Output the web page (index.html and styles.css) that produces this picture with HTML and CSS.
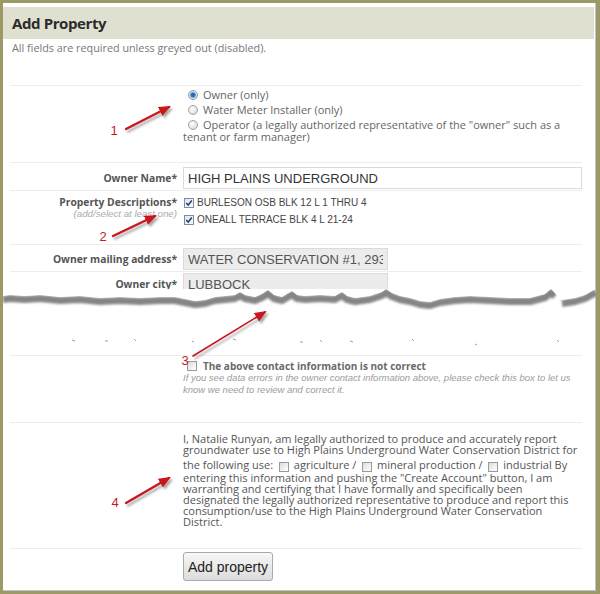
FILE: index.html
```html
<!DOCTYPE html>
<html>
<head>
<meta charset="utf-8">
<title>Add Property</title>
<link rel="stylesheet" href="styles.css">
</head>
<body>
<div class="frame">
  <div class="titlebar"><h1>Add Property</h1></div>
  <p class="note">All fields are required unless greyed out (disabled).</p>

  <form class="form">
    <div class="row row-role">
      <div class="lbl"></div>
      <div class="field">
        <label class="opt"><span class="radio on"></span>Owner (only)</label>
        <label class="opt"><span class="radio"></span>Water Meter Installer (only)</label>
        <label class="opt"><span class="radio"></span>Operator (a legally authorized representative of the "owner" such as a tenant or farm manager)</label>
      </div>
    </div>

    <div class="row row-input row-name">
      <div class="lbl">Owner Name*</div>
      <div class="field"><input class="txt" type="text" value="HIGH PLAINS UNDERGROUND"></div>
    </div>

    <div class="row row-props">
      <div class="lbl">
        <span class="lbl-main">Property Descriptions*</span>
        <span class="hint">(add/select at least one)</span>
      </div>
      <div class="field">
        <div class="chk-line"><span class="cb on"><svg viewBox="0 0 10 10" width="8" height="8"><path d="M1.5 5 L4 7.5 L8.5 1.8" /></svg></span>BURLESON OSB BLK 12 L 1 THRU 4</div>
        <div class="chk-line"><span class="cb on"><svg viewBox="0 0 10 10" width="8" height="8"><path d="M1.5 5 L4 7.5 L8.5 1.8" /></svg></span>ONEALL TERRACE BLK 4 L 21-24</div>
      </div>
    </div>

    <div class="row row-input row-addr">
      <div class="lbl">Owner mailing address*</div>
      <div class="field"><input class="txt dis" type="text" value="WATER CONSERVATION #1, 2930 AVE Q" disabled></div>
    </div>

    <div class="row row-input row-city">
      <div class="lbl">Owner city*</div>
      <div class="field"><input class="txt dis" type="text" value="LUBBOCK" disabled></div>
    </div>

    <svg class="torn" viewBox="3 289 593 66" width="593" height="66" aria-hidden="true">
      <defs>
        <filter id="soft" x="-5%" y="-50%" width="110%" height="200%"><feGaussianBlur stdDeviation="0.9"/></filter>
      </defs>
      <g class="shadow" filter="url(#soft)" transform="translate(0,3.5)">
        <polyline points="3,296 10,295 25,296 40,295 60,297 80,296 100,298 120,297 140,298 160,297 175,297 185,299 195,301 205,300 215,297 235,295 240,292 245,295 255,297 262,294 268,290 274,295 282,297 292,291 297,295 305,296 320,295 335,296 342,292 347,296 355,298 370,296 382,292 386,289 392,293 400,296 410,298 420,301 430,302 440,299 455,297 470,296 490,297 510,298 530,298 545,294 551,289 555,293"/>
        <polyline points="562,300 575,298 585,295 592,291 596,289"/>
      </g>
      <polygon class="paper" points="3,289 3,296 10,295 25,296 40,295 60,297 80,296 100,298 120,297 140,298 160,297 175,297 185,299 195,301 205,300 215,297 235,295 240,292 245,295 255,297 262,294 268,290 274,295 282,297 292,291 297,295 305,296 320,295 335,296 342,292 347,296 355,298 370,296 382,292 386,289 392,293 400,296 410,298 420,301 430,302 440,299 455,297 470,296 490,297 510,298 530,298 545,294 551,289 555,293 558,298 562,300 575,298 585,295 592,291 596,289"/>
      <g class="specks">
        <path d="M72 340 l3 1"/><path d="M105 341 l3 0"/><path d="M134 339 l2 2"/><path d="M192 341 l2 1"/>
        <path d="M233 339 l3 1"/><path d="M300 342 l3 0"/><path d="M320 340 l2 2"/><path d="M350 341 l3 1"/>
        <path d="M412 339 l2 2"/><path d="M475 344 l2 1"/><path d="M557 340 l2 2"/>
      </g>
    </svg>

    <div class="row row-contact">
      <div class="lbl"></div>
      <div class="field">
        <label class="contact-main"><span class="cb"></span>The above contact information is not correct</label>
        <p class="contact-note">If you see data errors in the owner contact information above, please check this box to let us know we need to review and correct it.</p>
      </div>
    </div>

    <div class="row row-cert">
      <div class="lbl"></div>
      <div class="field">
        <p class="cert">I, Natalie Runyan, am legally authorized to produce and accurately report groundwater use to High Plains Underground Water Conservation District for the following use: <span class="cb sm"></span> agriculture / <span class="cb sm"></span> mineral production / <span class="cb sm"></span> industrial By entering this information and pushing the "Create Account" button, I am warranting and certifying that I have formally and specifically been designated the legally authorized representative to produce and report this consumption/use to the High Plains Underground Water Conservation District.</p>
      </div>
    </div>

    <div class="row row-submit">
      <div class="lbl"></div>
      <div class="field"><button type="button" class="btn">Add property</button></div>
    </div>
  </form>

  <svg class="notes" viewBox="3 3 593 588" width="593" height="588" aria-hidden="true">
    <defs>
      <marker id="head" markerUnits="userSpaceOnUse" markerWidth="12" markerHeight="10" refX="10" refY="5" orient="auto">
        <path d="M0,0 L12,5 L0,10 z" fill="#c7191f"/>
      </marker>
      <filter id="drop" x="-20%" y="-20%" width="140%" height="160%">
        <feDropShadow dx="2" dy="2.5" stdDeviation="1.2" flood-color="#000" flood-opacity="0.35"/>
      </filter>
    </defs>
    <g filter="url(#drop)">
      <line class="arrow" x1="126" y1="129" x2="169" y2="107" marker-end="url(#head)"/>
      <line class="arrow" x1="113" y1="236" x2="155" y2="216" marker-end="url(#head)"/>
      <line class="arrow thin" x1="193" y1="356" x2="265" y2="312" marker-end="url(#head)"/>
      <line class="arrow" x1="126" y1="503" x2="169" y2="478" marker-end="url(#head)"/>
    </g>
    <text class="num" x="114" y="135">1</text>
    <text class="num" x="103" y="241">2</text>
    <text class="num" x="185" y="365">3</text>
    <text class="num" x="115" y="507">4</text>
  </svg>
</div>
</body>
</html>
```

FILE: styles.css
```css
* { box-sizing: border-box; }

html, body {
  margin: 0;
  padding: 0;
  background: #fff;
}

body {
  width: 600px;
  height: 594px;
  overflow: hidden;
}

.frame {
  position: relative;
  width: 600px;
  height: 594px;
  border: 3px solid #9b9a67;
  border-right-width: 4px;
  background: #fff;
  box-shadow: inset -1px -1px 0 #c4c4c4;
  font-family: "Open Sans", "DejaVu Sans", sans-serif;
  color: #555;
}

.titlebar {
  margin: 4px 2px 0 0;
  height: 32px;
  background: #e0e0d0;
  padding-left: 9px;
}

.titlebar h1 {
  margin: 0;
  font-size: 15px;
  line-height: 32px;
  font-weight: 700;
  letter-spacing: -0.4px;
  color: #2b2b2b;
}

.note {
  margin: 2px 0 0 9px;
  font-size: 10.8px;
  line-height: 14px;
  color: #777;
}

.form {
  margin: 30px 0 0 0;
}

.row {
  display: grid;
  grid-template-columns: 167px 1fr;
  column-gap: 6px;
  margin: 0 14px 0 7px;
  border-top: 1px solid #ededed;
}

.lbl {
  text-align: right;
  font-size: 10.3px;
  font-weight: 700;
  color: #555;
}

/* role radios */
.row-role { padding: 3px 0 19px; }

.opt {
  display: block;
  font-size: 11px;
  line-height: 12px;
  color: #666;
  margin-bottom: 3px;
}
.opt:last-child { margin-bottom: 0; }

.radio {
  display: inline-block;
  width: 10px;
  height: 10px;
  margin: 0 5px;
  border-radius: 50%;
  border: 1px solid #a3a3a3;
  background: radial-gradient(circle at 40% 35%, #ffffff 0, #e6e6e6 55%, #cfcfcf 100%);
  vertical-align: -1px;
}
.radio.on {
  background: radial-gradient(circle at 50% 50%, #1d5fa8 0, #2f7fc9 2.2px, #d8e2ec 3.2px, #e9e9e9 100%);
  border-color: #8a98a8;
}

/* text inputs */
.row-input { align-items: center; }
.row-name { padding: 4px 0 1px; }
.row-addr { padding: 3px 0 1px; }
.row-city { padding: 1px 0 0; }

.txt {
  display: block;
  width: 399px;
  height: 22px;
  margin: 0;
  padding: 0 4px;
  border: 1px solid #dadada;
  border-radius: 0;
  background: #fff;
  font-family: "Liberation Sans", Arial, sans-serif;
  font-size: 13px;
  color: #333;
  outline: none;
}
.txt.dis {
  width: 205px;
  background: #ececec;
  color: #555;
  -webkit-text-fill-color: #555;
  opacity: 1;
}

/* property descriptions */
.row-props {
  padding: 3px 0 16px;
  align-items: start;
}
.lbl-main {
  display: block;
  line-height: 17px;
}
.hint {
  display: block;
  margin-top: -2px;
  font-family: "Liberation Sans", Arial, sans-serif;
  font-style: italic;
  font-weight: 400;
  font-size: 9.7px;
  line-height: 10px;
  color: #ababab;
}

.chk-line {
  display: flex;
  align-items: center;
  height: 17px;
  font-family: "Liberation Sans", Arial, sans-serif;
  font-size: 10px;
  color: #444;
}

.cb {
  display: inline-flex;
  align-items: center;
  justify-content: center;
  width: 10px;
  height: 10px;
  margin: 0 3px 0 1px;
  border: 1px solid #9a9a9a;
  background: linear-gradient(135deg, #dcdcdc 0, #f2f2f2 60%, #ffffff 100%);
}
.cb.on {
  border-color: #7b8ea6;
  background: linear-gradient(135deg, #e4e8ee 0, #f6f7f9 100%);
}
.cb svg path {
  fill: none;
  stroke: #23407a;
  stroke-width: 1.9;
}

/* torn paper */
.torn {
  display: block;
  position: relative;
  margin-top: -6px;
}
.torn .shadow polyline {
  fill: none;
  stroke: #858585;
  stroke-width: 7;
  stroke-linejoin: round;
}
.torn .paper { fill: #fff; }
.torn .specks path {
  stroke: #a0a0a0;
  stroke-width: 1;
  fill: none;
}

/* contact correction */
.row-contact { padding: 4px 0 26px; }

.contact-main {
  display: block;
  font-size: 10px;
  line-height: 12px;
  font-weight: 700;
  color: #6a6a6a;
}
.contact-main .cb {
  margin: 0 6px 0 4px;
  vertical-align: -1px;
}
.contact-note {
  margin: 0;
  font-family: "Liberation Sans", Arial, sans-serif;
  font-style: italic;
  font-size: 9.5px;
  line-height: 12px;
  color: #9c9c9c;
}

/* certification */
.row-cert { padding: 10px 0 21px; }

.cert {
  margin: 0;
  max-width: 395px;
  font-size: 11px;
  line-height: 11px;
  color: #555;
}
.cb.sm {
  display: inline-block;
  width: 10px;
  height: 10px;
  margin: 7px 2px 0 3px;
  vertical-align: -3px;
}

/* submit */
.row-submit { padding: 3px 0 0; }

.btn {
  width: 90px;
  height: 29px;
  padding: 0;
  border: 1px solid #a9a9a9;
  border-radius: 3px;
  background: linear-gradient(#f7f7f7, #dcdcdc);
  font-family: "Liberation Sans", Arial, sans-serif;
  font-size: 14px;
  color: #222;
}

/* annotation overlay */
.notes {
  position: absolute;
  top: 0;
  left: 0;
  pointer-events: none;
}
.notes .arrow {
  stroke: #c7191f;
  stroke-width: 2.4;
  stroke-linecap: round;
}
.notes .arrow.thin { stroke-width: 1.6; }
.notes .num {
  font-family: "Liberation Sans", Arial, sans-serif;
  font-size: 13px;
  fill: #c7191f;
  text-anchor: middle;
}
```
